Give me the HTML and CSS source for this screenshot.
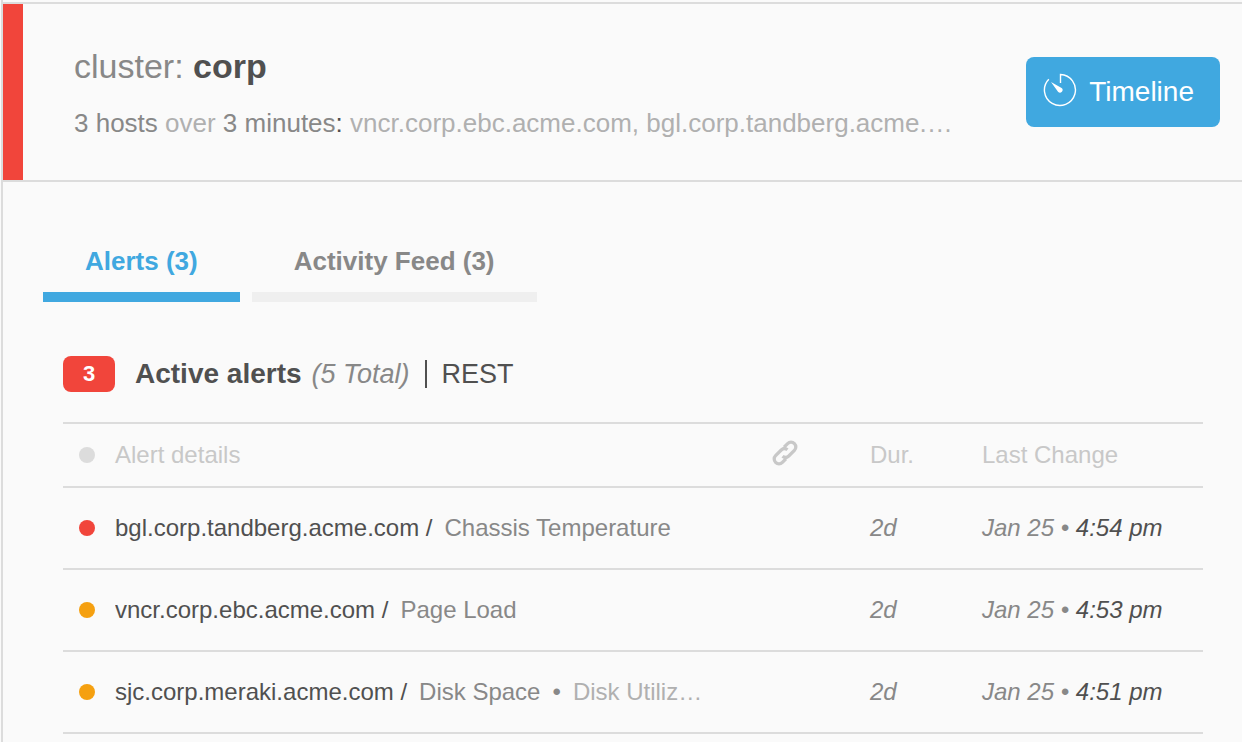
FILE: index.html
```html
<!DOCTYPE html>
<html lang="en">
<head>
    <meta charset="UTF-8">
    <meta name="viewport" content="width=device-width, initial-scale=1.0">
    <title>cluster: corp</title>
    <link rel="stylesheet" href="styles.css">
</head>
<body>
    <main class="incident">
        <header class="incident-header">
            <div class="incident-bar">
                <div class="incident-info">
                    <h1>cluster: <strong>corp</strong></h1>
                    <p class="summary"><span class="mid">3 hosts</span> over <span class="mid">3 minutes</span><span class="dark">:</span> vncr.corp.ebc.acme.com, bgl.corp.tandberg.acme.…</p>
                </div>
                <button type="button" class="timeline-btn">
                    <svg class="timeline-icon" viewBox="0 0 34 34" aria-hidden="true">
                        <path d="M17.500 10V1.500A15.500 15.500 0 1 1 5.800 6.200" fill="none" stroke="#fff" stroke-width="1.400"/>
                        <path d="M8 9L18.600 15A2.500 2.500 0 0 1 15.200 19Z" fill="#fff"/>
                    </svg>
                    Timeline
                </button>
            </div>
        </header>

        <nav class="tabs">
            <button type="button" class="tab active">Alerts (3)</button>
            <button type="button" class="tab">Activity Feed (3)</button>
        </nav>

        <section class="alerts">
            <div class="alerts-title">
                <span class="count">3</span>
                <h2>Active alerts</h2>
                <em class="mid">(5 Total)</em>
                <span class="divider"></span>
                <a href="#">REST</a>
            </div>

            <table>
                <thead>
                    <tr>
                        <th class="col-dot"><span class="dot"></span></th>
                        <th>Alert details</th>
                        <th class="col-link">
                            <svg class="link-icon" viewBox="0 0 26 26" role="img" aria-label="Link">
                                <g transform="translate(13 13) rotate(-45)" fill="none" stroke="#c8c8c8" stroke-width="3.300">
                                    <path d="M-3.500 4.800H-8.500A4.800 4.800 0 0 1 -8.500 -4.800H-.5A4.800 4.800 0 0 1 4 -.5"/>
                                    <path d="M3.500 -4.800H8.500A4.800 4.800 0 0 1 8.500 4.800H.5A4.800 4.800 0 0 1 -4 .5"/>
                                </g>
                            </svg>
                        </th>
                        <th class="col-dur">Dur.</th>
                        <th class="col-change">Last Change</th>
                    </tr>
                </thead>
                <tbody>
                    <tr>
                        <td><span class="dot critical"></span></td>
                        <td class="details">bgl.corp.tandberg.acme.com /<span class="check">Chassis Temperature</span></td>
                        <td></td>
                        <td class="time">2d</td>
                        <td class="time">Jan 25 • <span class="dark">4:54 pm</span></td>
                    </tr>
                    <tr>
                        <td><span class="dot warning"></span></td>
                        <td class="details">vncr.corp.ebc.acme.com /<span class="check">Page Load</span></td>
                        <td></td>
                        <td class="time">2d</td>
                        <td class="time">Jan 25 • <span class="dark">4:53 pm</span></td>
                    </tr>
                    <tr>
                        <td><span class="dot warning"></span></td>
                        <td class="details">sjc.corp.meraki.acme.com /<span class="check">Disk Space</span><span class="check">•</span><span class="check light">Disk Utiliz…</span></td>
                        <td></td>
                        <td class="time">2d</td>
                        <td class="time">Jan 25 • <span class="dark">4:51 pm</span></td>
                    </tr>
                </tbody>
            </table>
        </section>
    </main>
</body>
</html>
```

FILE: styles.css
```css
* {
    box-sizing: border-box;
}

body {
    margin: 0;
    padding-left: 1px;
    background-color: #fafafa;
    color: #505050;
    font-family: "Helvetica Neue", "Liberation Sans", Arial, sans-serif;
}

h1, h2, p {
    margin: 0;
}

button {
    border: 0;
    font-family: inherit;
    cursor: pointer;
}

.dark {
    color: #505050;
}

.mid {
    color: #888;
}

.light {
    color: #b0b0b0;
}

/* Header */
.incident {
    min-height: 100vh;
    padding-top: 2px;
    border-left: 2px solid #dcdcdc;
}

.incident-header {
    border-top: 2px solid #dcdcdc;
    border-bottom: 2px solid #dcdcdc;
}

.incident-bar {
    display: flex;
    justify-content: space-between;
    align-items: center;
    gap: 24px;
    height: 176px;
    padding: 0 22px 0 51px;
    border-left: 20px solid #f1453b;
}

.incident-info {
    min-width: 0;
}

h1 {
    margin-bottom: 21px;
    color: #888;
    font-size: 34px;
    font-weight: normal;
    line-height: 40px;
}

h1 strong {
    color: #505050;
}

.summary {
    overflow: hidden;
    color: #b0b0b0;
    font-size: 26px;
    line-height: 32px;
    white-space: nowrap;
    text-overflow: ellipsis;
}

.timeline-btn {
    display: flex;
    flex-shrink: 0;
    align-items: center;
    gap: 12px;
    height: 70px;
    padding: 0 26px 0 17px;
    border-radius: 8px;
    background-color: #40a8e0;
    color: #fff;
    font-size: 28px;
}

.timeline-icon {
    width: 34px;
    height: 34px;
    margin-bottom: 4px;
}

/* Tabs */
.tabs {
    display: flex;
    gap: 12px;
    padding: 60px 40px 0;
}

.tab {
    padding: 0 42px 12px;
    border-bottom: 10px solid #efefef;
    background: none;
    color: #888;
    font-size: 26px;
    font-weight: bold;
    line-height: 38px;
}

.tab.active {
    border-color: #40a8e0;
    color: #40a8e0;
}

/* Alerts */
.alerts {
    padding: 54px 39px 8px 60px;
}

.alerts-title {
    display: flex;
    align-items: center;
    margin-bottom: 30px;
    font-size: 27px;
    line-height: 36px;
}

.alerts-title h2 {
    margin: 0 10px 0 20px;
    font-size: 28px;
}

.alerts-title a {
    color: #505050;
    text-decoration: none;
}

.count {
    width: 52px;
    border-radius: 8px;
    background-color: #f1453b;
    color: #fff;
    font-size: 22px;
    font-weight: bold;
    text-align: center;
}

.divider {
    width: 2px;
    height: 28px;
    margin: 0 15px;
    background-color: #505050;
}

table {
    width: 100%;
    border-top: 2px solid #dcdcdc;
    border-spacing: 0;
    table-layout: fixed;
    font-size: 24px;
}

th, td {
    height: 82px;
    padding: 0;
    border-bottom: 2px solid #dcdcdc;
    text-align: left;
    white-space: nowrap;
}

th {
    height: 64px;
    color: #c8c8c8;
    font-weight: normal;
}

.col-dot {
    width: 52px;
}

.col-link {
    width: 98px;
}

.col-dur {
    width: 112px;
}

.col-change {
    width: 221px;
}

.dot {
    display: block;
    width: 16px;
    height: 16px;
    margin-left: 16px;
    border-radius: 50%;
    background-color: #dcdcdc;
}

.dot.critical {
    background-color: #f1453b;
}

.dot.warning {
    background-color: #f5a010;
}

.link-icon {
    display: block;
    width: 26px;
    height: 26px;
    margin-bottom: 4px;
}

.details {
    overflow: hidden;
    text-overflow: ellipsis;
}

.check {
    margin-left: 12px;
    color: #888;
}

.check.light {
    color: #b0b0b0;
}

.time {
    color: #888;
    font-style: italic;
}
```
